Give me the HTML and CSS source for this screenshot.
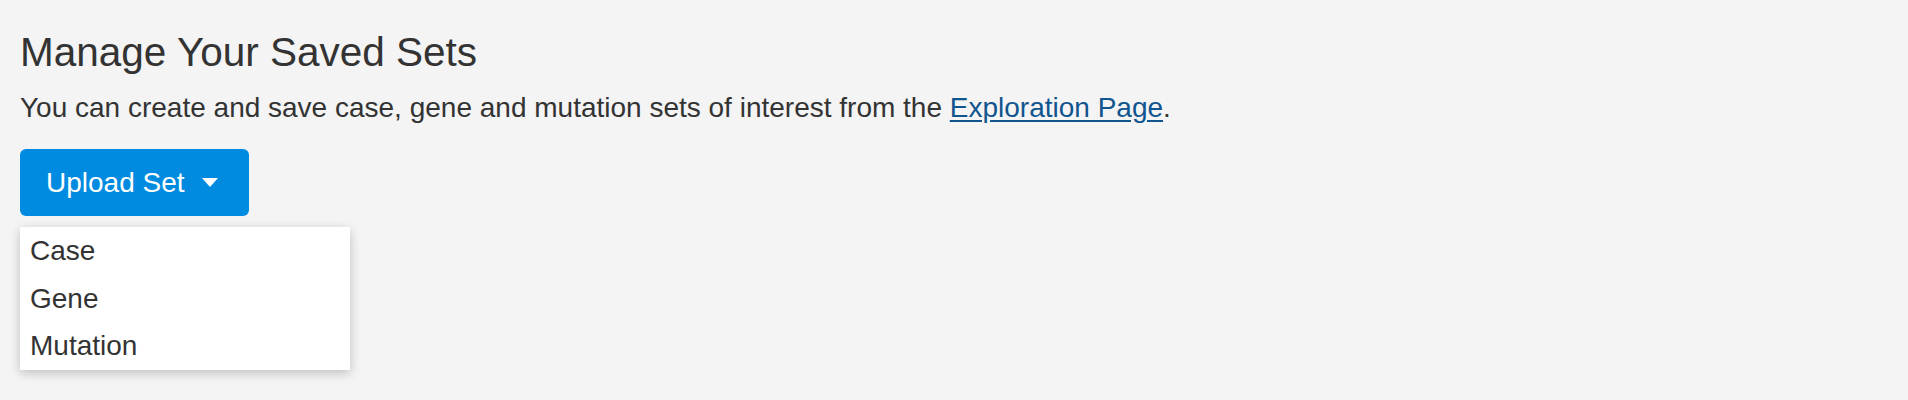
FILE: index.html
```html
<!DOCTYPE html>
<html lang="en">
<head>
<meta charset="utf-8">
<title>Manage Your Saved Sets</title>
<link rel="stylesheet" href="styles.css">
</head>
<body>
<main class="page">
  <h1 class="title">Manage Your Saved Sets</h1>
  <p class="intro">You can create and save case, gene and mutation sets of interest from the <a class="link" href="#">Exploration Page</a>.</p>
  <div class="upload">
    <button class="upload-btn" type="button">
      <span>Upload Set</span>
      <svg class="caret" width="16" height="9" viewBox="0 0 16 9" aria-hidden="true"><path d="M0 0 H16 L8 9 Z" fill="#fff"/></svg>
    </button>
    <ul class="menu">
      <li class="menu-item">Case</li>
      <li class="menu-item">Gene</li>
      <li class="menu-item">Mutation</li>
    </ul>
  </div>
</main>
</body>
</html>
```
FILE: styles.css
```css
html, body {
  margin: 0;
  padding: 0;
  background: #f4f4f4;
}
body {
  font-family: "Liberation Sans", Arial, Helvetica, sans-serif;
  color: #333333;
  min-height: 400px;
}
.page {
  padding: 30px 20px 0 20px;
}
.title {
  margin: 0;
  font-size: 40.5px;
  line-height: 44px;
  font-weight: 400;
  color: #333333;
}
.intro {
  margin: 14px 0 0 0;
  font-size: 28px;
  line-height: 40px;
}
.link {
  color: #11558f;
  text-decoration: underline;
  text-underline-offset: 3px;
}
.upload {
  margin-top: 21px;
  display: flex;
  flex-direction: column;
  align-items: flex-start;
  gap: 11px;
}
.upload-btn {
  display: flex;
  align-items: center;
  gap: 17px;
  height: 67px;
  padding: 0 31px 0 26px;
  border: none;
  border-radius: 6px;
  background: #008be0;
  color: #ffffff;
  font-family: "Liberation Sans", Arial, Helvetica, sans-serif;
  font-size: 28px;
  cursor: pointer;
}
.caret {
  display: block;
}
.menu {
  width: 330px;
  margin: 0;
  padding: 0;
  list-style: none;
  background: #ffffff;
  box-shadow: 0 3px 10px rgba(0, 0, 0, 0.22);
}
.menu-item {
  height: 47.67px;
  line-height: 47.67px;
  padding: 0 10px;
  font-size: 28px;
  color: #333333;
}
```
